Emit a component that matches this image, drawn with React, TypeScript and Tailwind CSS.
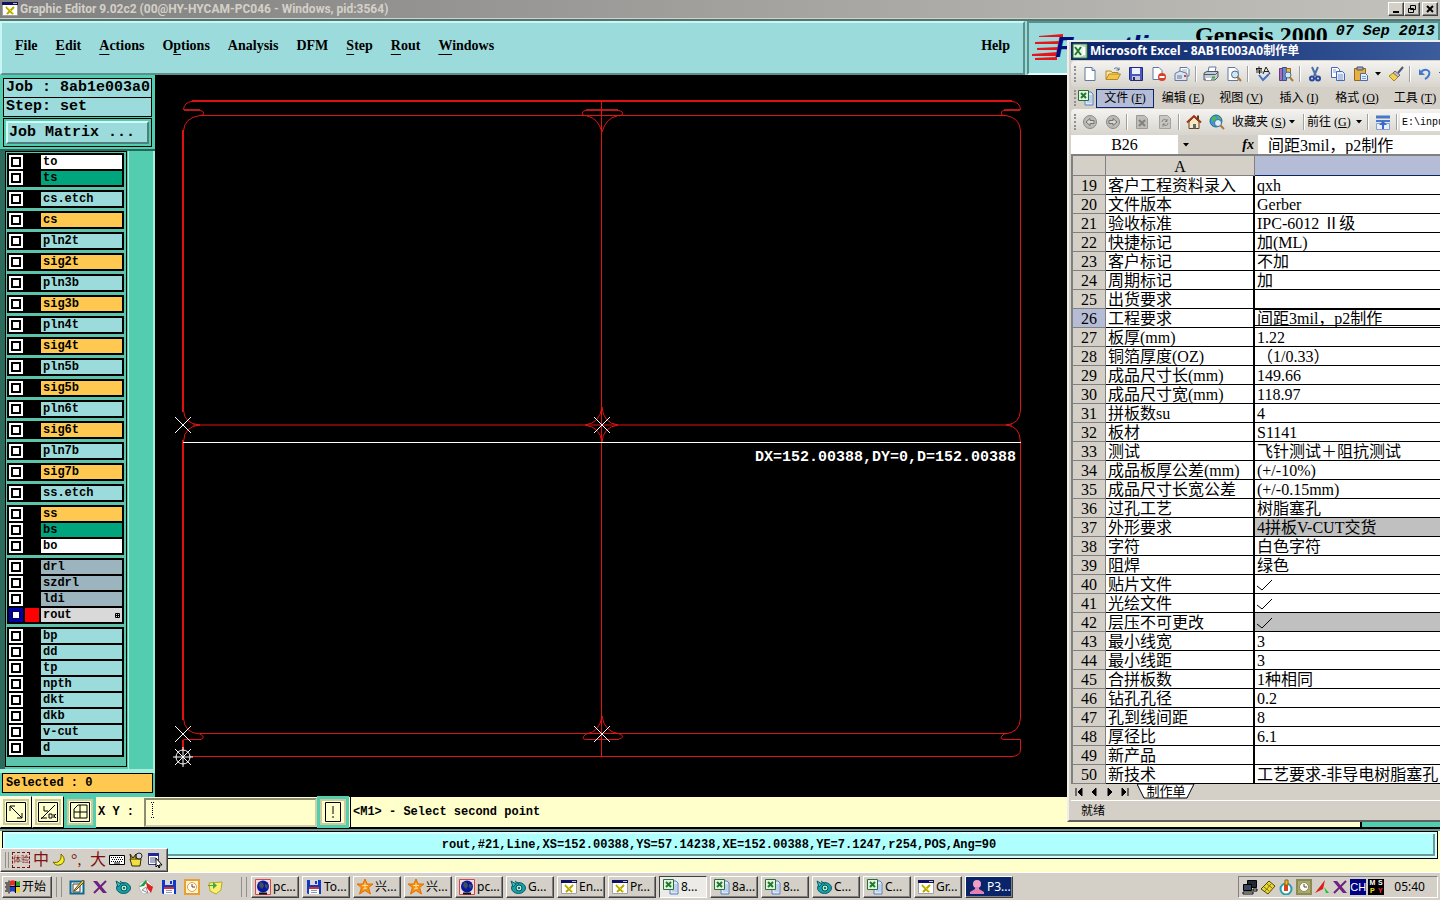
import type { ReactNode } from "react";

type Row = { no: number; label: string; value: string; shaded?: boolean };

const raised =
  "border border-t-white border-l-white border-r-[#404040] border-b-[#404040] shadow-[inset_-1px_-1px_0_#808080]";
const mono = "font-['Liberation_Mono',monospace] font-bold";
const song = "font-['Liberation_Serif','Noto_Sans_CJK_SC',serif]";
const tahoma = "font-['Noto_Sans','Noto_Sans_CJK_SC',sans-serif]";

const layerColors = {
  white: "bg-white",
  green: "bg-[#00a57d]",
  cyan: "bg-[#9cdbdb]",
  orange: "bg-[#ffc850]",
  slate: "bg-[#9cb4be]",
  gray: "bg-[#d9d9d9]",
};

type Layer = [string, keyof typeof layerColors];

const layerGroups: Layer[][] = [
  [["to", "white"], ["ts", "green"]],
  [["cs.etch", "cyan"]],
  [["cs", "orange"]],
  [["pln2t", "cyan"]],
  [["sig2t", "orange"]],
  [["pln3b", "cyan"]],
  [["sig3b", "orange"]],
  [["pln4t", "cyan"]],
  [["sig4t", "orange"]],
  [["pln5b", "cyan"]],
  [["sig5b", "orange"]],
  [["pln6t", "cyan"]],
  [["sig6t", "orange"]],
  [["pln7b", "cyan"]],
  [["sig7b", "orange"]],
  [["ss.etch", "cyan"]],
  [["ss", "orange"], ["bs", "green"], ["bo", "white"]],
  [["drl", "slate"], ["szdrl", "slate"], ["ldi", "slate"], ["rout", "gray"]],
  [
    ["bp", "cyan"], ["dd", "cyan"], ["tp", "cyan"], ["npth", "cyan"],
    ["dkt", "cyan"], ["dkb", "cyan"], ["v-cut", "cyan"], ["d", "cyan"],
  ],
];

const rows: Row[] = [
  { no: 19, label: "客户工程资料录入", value: "qxh" },
  { no: 20, label: "文件版本", value: "Gerber" },
  { no: 21, label: "验收标准", value: "IPC-6012 Ⅱ级" },
  { no: 22, label: "快捷标记", value: "加(ML)" },
  { no: 23, label: "客户标记", value: "不加" },
  { no: 24, label: "周期标记", value: "加" },
  { no: 25, label: "出货要求", value: "" },
  { no: 26, label: "工程要求", value: "间距3mil，p2制作" },
  { no: 27, label: "板厚(mm)", value: "1.22" },
  { no: 28, label: "铜箔厚度(OZ)", value: "（1/0.33）" },
  { no: 29, label: "成品尺寸长(mm)", value: "149.66" },
  { no: 30, label: "成品尺寸宽(mm)", value: "118.97" },
  { no: 31, label: "拼板数su", value: "4" },
  { no: 32, label: "板材", value: "S1141" },
  { no: 33, label: "测试", value: "飞针测试＋阻抗测试" },
  { no: 34, label: "成品板厚公差(mm)", value: "(+/-10%)" },
  { no: 35, label: "成品尺寸长宽公差", value: "(+/-0.15mm)" },
  { no: 36, label: "过孔工艺", value: "树脂塞孔" },
  { no: 37, label: "外形要求", value: "4拼板V-CUT交货", shaded: true },
  { no: 38, label: "字符", value: "白色字符" },
  { no: 39, label: "阻焊", value: "绿色" },
  { no: 40, label: "贴片文件", value: "✓" },
  { no: 41, label: "光绘文件", value: "✓" },
  { no: 42, label: "层压不可更改", value: "✓", shaded: true },
  { no: 43, label: "最小线宽", value: "3" },
  { no: 44, label: "最小线距", value: "3" },
  { no: 45, label: "合拼板数", value: "1种相同" },
  { no: 46, label: "钻孔孔径", value: "0.2" },
  { no: 47, label: "孔到线间距", value: "8" },
  { no: 48, label: "厚径比", value: "6.1" },
  { no: 49, label: "新产品", value: "" },
  { no: 50, label: "新技术", value: "工艺要求-非导电树脂塞孔" },
];

/* ---------- icons ---------- */

function Ico({ children }: { children: ReactNode }) {
  return (
    <svg viewBox="0 0 16 16" className="h-4 w-4 shrink-0" fill="none" aria-hidden="true">
      {children}
    </svg>
  );
}

const ExceedIcon = () => (
  <Ico>
    <path d="M.5 1.500h15v13H.5z" fill="#fff" stroke="#a0a0a0" />
    <path d="M0 1h16v3H0z" fill="#101060" />
    <path d="M11 2h4v1h-4z" fill="#c0c0c0" />
    <path d="M4 6l7 7M12 6l-7 7" stroke="#b4a800" strokeWidth="2" />
    <path d="M5 6l7 7" stroke="#f0e020" />
  </Ico>
);

const ExcelIcon = () => (
  <Ico>
    <path d="M1 1h14v14H1z" fill="#dcefdc" stroke="#2b6e35" />
    <path d="M9 3h5v10H9z" fill="#fff" stroke="#80b080" />
    <path d="M2 3h9v10H2z" fill="#e8f6e6" />
    <path d="M3 4l6 8M9 4l-6 8" stroke="#1f7a2e" strokeWidth="2" />
  </Ico>
);

const SheetIcon = () => (
  <Ico>
    <path d="M7 2h6l2 2v11H7z" fill="#dceafc" stroke="#5a80b8" />
    <path d="M9 6h5M9 8h5M9 10h5M9 12h5" stroke="#9fb9dd" />
    <path d="M.5.5h10v10H.5z" fill="#e4f3e0" stroke="#2b6e35" />
    <path d="M3 3l5 5M8 3L3 8" stroke="#1f7a2e" strokeWidth="2" />
  </Ico>
);

const NewIcon = () => (
  <Ico>
    <path d="M3 1.500h7l3 3v10H3z" fill="#fff" stroke="#6078a0" />
    <path d="M10 1.500v3h3" fill="#c8d8f0" stroke="#6078a0" />
  </Ico>
);

const OpenIcon = () => (
  <Ico>
    <path d="M1 13V5h5l1 1.500h6V8" fill="#ffe9a0" stroke="#b08828" />
    <path d="M1 13.500L4 8h11.500l-3 5.500z" fill="#f6c548" stroke="#b08828" />
    <path d="M9 3c2-2 4-1 5 1m0 0V1.500M14 4h-2.500" stroke="#506890" />
  </Ico>
);

const SaveIcon = () => (
  <Ico>
    <path d="M1.500 1.500h13v13h-12l-1-1z" fill="#4a58c0" stroke="#202a80" />
    <path d="M4 2h8v6H4z" fill="#eef2ff" />
    <path d="M4 10h8v4H4z" fill="#c4c8d4" />
    <path d="M5 11h2v3H5z" fill="#202a80" />
  </Ico>
);

const FloppyIcon = () => (
  <Ico>
    <path d="M1 1h14v14H2l-1-1z" fill="#1038c8" />
    <path d="M4 1h8v5H4z" fill="#d8d8d8" />
    <path d="M9 2h2v3H9z" fill="#1038c8" />
    <path d="M3 8h10v7H3z" fill="#fff" />
    <path d="M3 8h10v2H3z" fill="#d83020" />
    <path d="M5 11.500h6M5 13.500h6" stroke="#8898c0" />
  </Ico>
);

const DeniedIcon = () => (
  <Ico>
    <path d="M2 1.500h6l3 3v9H2z" fill="#fff" stroke="#6078a0" />
    <circle cx="11" cy="11" r="4" fill="#d84028" />
    <path d="M8.500 11h5" stroke="#fff" strokeWidth="2" />
  </Ico>
);

const MailIcon = () => (
  <Ico>
    <path d="M6 1.500h7l2 2V10H6z" fill="#fff" stroke="#6078a0" />
    <path d="M8 4h5M8 6h5" stroke="#9fb0cc" />
    <path d="M1 7.500l5-2.500 7 2.500v7H1z" fill="#dde4f0" stroke="#6078a0" />
    <path d="M3 10h5M3 12h5" stroke="#6078a0" />
    <path d="M10 9h2v2h-2z" fill="#d84028" />
  </Ico>
);

const PrintIcon = () => (
  <Ico>
    <path d="M5 6l1-5h7l-1 5" fill="#fff" stroke="#6078a0" />
    <path d="M1 7l3-1.500h11V11l-3 3H1z" fill="#c4cbd8" stroke="#505868" />
    <path d="M1 8.500h11.500L15 6" stroke="#505868" />
    <path d="M9 10.500h3v2H9z" fill="#30b030" />
    <path d="M3 13h5" stroke="#fff" strokeWidth="2" />
  </Ico>
);

const PreviewIcon = () => (
  <Ico>
    <path d="M2 1.500h7l3 3v10H2z" fill="#fff" stroke="#6078a0" />
    <circle cx="9" cy="8.500" r="3.500" fill="#cfe8f8" stroke="#506890" />
    <path d="M11.500 11l3.500 4" stroke="#b07830" strokeWidth="2" />
  </Ico>
);

const SpellIcon = () => (
  <Ico>
    <path d="M1 2.500h6M4 .5v2M1.500 2.500v2M7 4H2m2.500 0v4M1 6h6.500" stroke="#202020" />
    <path d="M8 8l3-7 4 7M9 5.500h5" stroke="#202020" />
    <path d="M4 9l4 5 6-6" stroke="#4870c8" strokeWidth="2" />
  </Ico>
);

const ResearchIcon = () => (
  <Ico>
    <path d="M1.500 2.500h3v12h-3z" fill="#a86cb8" stroke="#683878" />
    <path d="M4.500 1.500h4v13h-4z" fill="#6888d0" stroke="#384c90" />
    <path d="M8.500 2.500h4v8h-4z" fill="#e8b860" stroke="#906820" />
    <circle cx="10" cy="9" r="3" fill="#cfe8f8" stroke="#506890" />
    <path d="M12 11.500l3 3.500" stroke="#b07830" strokeWidth="2" />
  </Ico>
);

const CutIcon = () => (
  <Ico>
    <path d="M5 1l4 9M11 1L7 10" stroke="#5070a8" strokeWidth="2" />
    <circle cx="5" cy="12.500" r="2" stroke="#2848a0" strokeWidth="2" />
    <circle cx="11" cy="12.500" r="2" stroke="#2848a0" strokeWidth="2" />
  </Ico>
);

const CopyIcon = () => (
  <Ico>
    <path d="M1.500 1.500h6l2 2v8h-8z" fill="#fff" stroke="#4868b0" />
    <path d="M6.500 5.500h6l2 2v7h-8z" fill="#e4eefc" stroke="#4868b0" />
    <path d="M8 9h5M8 11h5M8 13h5M3 4h3M3 6h3" stroke="#7f9bd0" />
  </Ico>
);

const PasteIcon = () => (
  <Ico>
    <path d="M1.500 2.500h11v12h-11z" fill="#e8b040" stroke="#906820" />
    <path d="M4 1h6v3H4z" fill="#a0a8b8" stroke="#505868" />
    <path d="M7.500 7.500h5l2 2v5h-7z" fill="#e4eefc" stroke="#4868b0" />
    <path d="M9 10.500h4M9 12.500h4" stroke="#7f9bd0" />
  </Ico>
);

const BrushIcon = () => (
  <Ico>
    <path d="M15 1l-5 6" stroke="#505868" strokeWidth="2" />
    <path d="M7 5l5 4-2 2-5-4z" fill="#c0b8d8" stroke="#686088" />
    <path d="M5 7l5 4-4 4-5-5z" fill="#f0d050" stroke="#a88820" />
  </Ico>
);

const UndoIcon = () => (
  <Ico>
    <path d="M4 6c4-4 10-2 8 3-1 2-2 3-4 4" stroke="#4078d0" strokeWidth="2" />
    <path d="M2 3v6h6z" fill="#4078d0" />
  </Ico>
);

const ArrowDisc = ({ flip }: { flip?: boolean }) => (
  <Ico>
    <circle cx="8" cy="8" r="6.500" fill="#bcbab4" stroke="#8c8a84" />
    <path
      d={flip ? "M12 8L8 4.500v2H4v3h4v2z" : "M4 8l4-3.500v2h4v3H8v2z"}
      fill="#d8d6d0"
      stroke="#747270"
    />
  </Ico>
);

const StopIcon = () => (
  <Ico>
    <path d="M2.500 1.500h8l3 3v10h-11z" fill="#c0beb8" stroke="#9c9a94" />
    <path d="M5 6l6 6M11 6l-6 6" stroke="#83817b" strokeWidth="2" />
  </Ico>
);

const RefreshIcon = () => (
  <Ico>
    <path d="M2.500 1.500h8l3 3v10h-11z" fill="#c8c6c0" stroke="#a4a29c" />
    <path d="M5 8c0-3 4-3 5-1m1 2c0 3-4 3-5 1M10 5v2.500H8M6 12.500V10h2" stroke="#83817b" />
  </Ico>
);

const HomeIcon = () => (
  <Ico>
    <path d="M3 8v6.500h10V8L8 3z" fill="#f8e8c0" stroke="#604020" />
    <path d="M1 8.500L8 2l7 6.500" stroke="#a03818" strokeWidth="2" />
    <path d="M7 10h3v4.500H7z" fill="#606870" />
    <path d="M12 1.500v4" stroke="#604020" strokeWidth="2" />
  </Ico>
);

const GlobeSearchIcon = () => (
  <Ico>
    <circle cx="7" cy="7" r="6" fill="#3c9ad0" stroke="#206890" />
    <path d="M3 3c3-1 5 0 4 2s-3 1-4 3M9 2c2 1 3 3 3 4l-3-1z" fill="#50b850" />
    <circle cx="9" cy="9" r="3.500" fill="#d8f0fc" stroke="#506890" />
    <path d="M11.500 11.500L15 15" stroke="#b07830" strokeWidth="2" />
  </Ico>
);

const AddressIcon = () => (
  <Ico>
    <path d="M1 1.500h14v3H1zM1 6h14v2H1z" fill="#4878c8" />
    <path d="M1.500 9.500h13v6h-13z" fill="#e8f0fc" stroke="#88a0d0" />
    <path d="M8 7l4 4H9v4H7v-4H4z" fill="#3868d0" />
  </Ico>
);

const GlobeTaskIcon = () => (
  <Ico>
    <path d="M.5.5h15v15H.5z" fill="#f4dcdc" stroke="#d04848" />
    <circle cx="8" cy="7.500" r="6" fill="#0818a0" />
    <path d="M5 3l3 1 1 3-2 3-3-3zM10 5l3 1-1 4-2-2z" fill="#405058" />
    <path d="M4 14.500h8" stroke="#101010" strokeWidth="2" />
  </Ico>
);

const StarIcon = () => (
  <Ico>
    <path d="M8 0l2.200 5H16l-4.400 3.600L13.500 15 8 11.500 2.500 15l1.900-6.400L0 5h5.800z" fill="#f49018" stroke="#e07000" />
    <path d="M5 6.500h6M8 4v5M6 10l4-1" stroke="#ffe090" />
  </Ico>
);

const GearEyeIcon = () => (
  <Ico>
    <ellipse cx="8.500" cy="9" rx="7" ry="5.500" fill="#18a0a8" stroke="#086068" />
    <path d="M1 2l5 3-3 3zM5 2l4 3" fill="#30c0b8" stroke="#086068" />
    <circle cx="9" cy="9" r="3" fill="#a8f0c0" stroke="#085058" />
    <circle cx="9" cy="9" r="1" fill="#0828a0" />
  </Ico>
);

const PersonIcon = () => (
  <Ico>
    <circle cx="8" cy="5" r="4" fill="#f0a0c8" />
    <path d="M6 8h4v2l5 3v2H1v-2l5-3z" fill="#e480b4" />
  </Ico>
);

const NotepadIcon = () => (
  <Ico>
    <path d="M1.500 2.500h13v12h-13z" fill="#e8f8fc" stroke="#106888" strokeWidth="2" />
    <path d="M4 5h7v8H4z" fill="#fff" stroke="#404040" />
    <path d="M14 1L6 10l-1 2 2-1 8-8z" fill="#f0d050" stroke="#604810" />
  </Ico>
);

const PurpleXIcon = () => (
  <Ico>
    <path d="M1 2h4l10 12h-4z" fill="#702080" />
    <path d="M14 2L2 14" stroke="#702080" strokeWidth="2" />
  </Ico>
);

const KiteIcon = () => (
  <Ico>
    <path d="M2 4l7-3 6 6-3 7-7 1-4-6z" fill="#fff" stroke="#c0c0c0" />
    <path d="M8 1L1 8l5-1 3-4z" fill="#10a040" />
    <path d="M8 3l7 5-2 6-4-5z" fill="#e02020" />
    <path d="M4 11l4-3 2 6z" fill="#f0f0f0" stroke="#909090" />
  </Ico>
);

const ClockIcon = ({ color, face }: { color: string; face: string }) => (
  <Ico>
    <path d="M1 1h14v14H1z" fill={face} stroke={color} strokeWidth="2" />
    <circle cx="8" cy="8" r="4.500" fill="#fff" stroke={color} />
    <path d="M8 5v3h3" stroke="#604020" />
  </Ico>
);

const NoteIcon = () => (
  <Ico>
    <path d="M2 4l13-1-1 8-5 4-6-3z" fill="#f8f070" stroke="#b8a830" />
    <path d="M1 6h5V3l4 3.500L6 10V7H1z" fill="#40a840" />
  </Ico>
);

const WindowsFlag = () => (
  <Ico>
    <path d="M5 2c2-1 4-1 5 0v5C8 6 7 6 5 7z" fill="#e03020" />
    <path d="M11 2c1 1 3 1 4 0v5c-1 1-3 1-4 0z" fill="#20a030" />
    <path d="M5 8c2-1 4-1 5 0v5c-2-1-3-1-5 0z" fill="#2040d0" />
    <path d="M11 8c1 1 3 1 4 0v5c-1 1-3 1-4 0z" fill="#f0d020" />
    <path d="M4 1.500v13M10.500 2v12M5 7.500h10" stroke="#000" />
    <path d="M0 4h3M1 6h2M0 8h3M1 10h2M0 12h3" stroke="#000" />
  </Ico>
);

const NetworkIcon = () => (
  <Ico>
    <path d="M5.500 1.500h9v7h-9z" fill="#202838" stroke="#000" />
    <path d="M1.500 5.500h8v6h-8z" fill="#384858" stroke="#000" />
    <path d="M1 13h10v2H1zM11 10h4v2h-4z" fill="#e8e8e0" stroke="#000" />
  </Ico>
);

const DiamondIcon = () => (
  <Ico>
    <path d="M1 10l8-8 6 5-7 8z" fill="#e8d830" stroke="#504808" />
    <path d="M4 8l5 4M7 5l5 4M5 12l6-7" stroke="#807410" />
  </Ico>
);

const BottleIcon = () => (
  <Ico>
    <circle cx="8" cy="10" r="5.500" fill="#fff" stroke="#20a0a8" strokeWidth="2" />
    <path d="M6 6h4v6H6z" fill="#e04020" />
    <path d="M7 1h3v5H7z" fill="#f0c020" stroke="#906010" />
  </Ico>
);

const SignalIcon = () => (
  <Ico>
    <path d="M11 1L9 10l-8 4z" fill="#e01818" />
    <path d="M10 8l5 6h-3z" fill="#20c020" />
  </Ico>
);

const KeyboardIcon = () => (
  <Ico>
    <path d="M.5 3.500h15v9H.5z" fill="#fff" stroke="#000" />
    <path d="M2 5.500h12M3 7.500h11M2 9.500h12" stroke="#000" strokeDasharray="1 1" />
    <path d="M5 11h6" stroke="#000" />
  </Ico>
);

const PaintIcon = () => (
  <Ico>
    <path d="M2 7h11l-1 7H4z" fill="#f0e040" stroke="#302808" />
    <path d="M3 7L2 2l3 4 3-4v5" fill="#c09030" stroke="#302808" />
    <circle cx="11" cy="4" r="3" fill="#c8d8f0" stroke="#302808" />
  </Ico>
);

const PropsIcon = () => (
  <Ico>
    <path d="M1.500 1.500h10v11h-10z" fill="#fff" stroke="#303878" />
    <path d="M1 1h11v3H1z" fill="#202890" />
    <path d="M3 6h6M3 8h6M3 10h5" stroke="#505890" />
    <path d="M9 6v9l2-2 1 3 1-1-1-2h3z" fill="#fff" stroke="#000" />
  </Ico>
);

/* ---------- graphic editor ---------- */

function TitleBar() {
  const glyphs = ["M3 9h6", "M4.500 2.500h5v4h-5zM2.500 5.500h5v4h-5z", "M3 3l6 6M9 3l-6 6"];
  const names = ["Minimize", "Restore", "Close"];
  return (
    <div className="flex h-[19px] shrink-0 items-center border-b border-[#d4d0c8] bg-linear-to-r from-[#808080] to-[#c4c2bc] px-0.5">
      <ExceedIcon />
      <h1 className="flex-1 pl-0.5 font-['Roboto',sans-serif] text-xs leading-4 font-bold whitespace-pre text-[#d4d0c8]">
        Graphic Editor 9.02c2 (00@HY-HYCAM-PC046 - Windows, pid:3564)
      </h1>
      {names.map((name, i) => (
        <button
          key={name}
          aria-label={name}
          className={`flex h-3.5 w-4 items-center justify-center bg-[#d4d0c8] last:ml-0.5 ${raised}`}
        >
          <svg viewBox="0 0 12 12" className="h-3 w-3" fill="none" stroke="#000" strokeWidth={i === 1 ? 1 : 2}>
            <path d={glyphs[i]} />
          </svg>
        </button>
      ))}
    </div>
  );
}

function Menu({ text, mark }: { text: string; mark?: number }) {
  return (
    <button className="whitespace-nowrap">
      {mark === undefined ? (
        text
      ) : (
        <>
          {text.slice(0, mark)}
          <span className="underline underline-offset-4">{text[mark]}</span>
          {text.slice(mark + 1)}
        </>
      )}
    </button>
  );
}

function Header() {
  return (
    <header className="flex h-14 shrink-0 border-t-2 border-[#4f7774] bg-[#9cdbdb]">
      <nav className="flex flex-1 items-center gap-[18px] border-2 border-t-[#c8f6f4] border-r-[#5b8f8c] border-b-[#5b8f8c] border-l-[#c8f6f4] px-[13px] pb-1 font-['Liberation_Serif',serif] text-sm leading-5 font-bold shadow-[0_1px_0_#e0ffff]">
        <Menu text="File" mark={0} />
        <Menu text="Edit" mark={0} />
        <Menu text="Actions" mark={0} />
        <Menu text="Options" mark={1} />
        <Menu text="Analysis" />
        <Menu text="DFM" />
        <Menu text="Step" mark={0} />
        <Menu text="Rout" mark={0} />
        <Menu text="Windows" mark={0} />
        <span className="flex-1" />
        <Menu text="Help" />
      </nav>
      <div className="ml-0.5 flex w-[413px] items-start overflow-hidden border-2 border-[#5b8f8c] border-b-[#e0ffff]">
        <svg viewBox="0 0 160 50" className="h-[50px] w-40 shrink-0">
          <path d="M10 13l24-2v3H10zM6 19l26-1v3H6zM8 25l22-1v3H8zM3 31l26-2v4H3zM6 35l22-1v3H6z" fill="#e8141c" />
          <text x="26" y="34" fontSize="30" fontWeight="bold" fontStyle="italic" fontFamily="Liberation Sans" fill="#00107c">
            Frontline
          </text>
        </svg>
        <span className="ml-1.5 font-['Liberation_Serif',serif] text-2xl leading-6 font-bold whitespace-nowrap">Genesis 2000</span>
        <span className={`${mono} ml-2 text-[15px] leading-[18px] whitespace-nowrap italic`}>07 Sep 2013</span>
      </div>
    </header>
  );
}

function LayerRow({ layer: [name, color] }: { layer: Layer }) {
  const active = name === "rout";
  return (
    <label className="flex h-3.5 gap-0.5">
      <input
        type="checkbox"
        className={`h-3.5 w-3.5 shrink-0 appearance-none border-2 bg-white ${
          active ? "border-[#0000b4] shadow-[inset_0_0_0_2px_#000070]" : "border-white shadow-[inset_0_0_0_2px_#000]"
        }`}
      />
      <span className={`w-3.5 shrink-0 ${active ? "bg-[#ff0000]" : "bg-black"}`} />
      <span className={`flex flex-1 items-center justify-between px-0.5 leading-[14px] ${layerColors[color]}`}>
        {name}
        {active && (
          <svg viewBox="0 0 5 5" className="h-[5px] w-[5px]" fill="none" stroke="#000">
            <path d="M.5.5h4v4h-4zM2.500 0v5M0 2.500h5" />
          </svg>
        )}
      </span>
    </label>
  );
}

function Sidebar() {
  return (
    <aside className={`${mono} flex w-[155px] shrink-0 flex-col bg-[#52cdb0] text-xs text-black`}>
      <div className="flex flex-col border-b-2 border-[#226858] px-[3px] pt-[3px] pb-0.5 text-[15px] whitespace-pre">
        <div className="h-5 overflow-hidden border border-black bg-[#9cdbdb] pl-0.5 leading-[18px]">Job : 8ab1e003a0</div>
        <div className="h-[19px] border border-t-0 border-black bg-[#9cdbdb] pl-0.5 leading-[18px]">Step: set</div>
        <div className="mt-px border border-black p-0.5">
          <button className="h-[23px] w-full border-2 border-t-[#d0fff8] border-r-[#4f7f7c] border-b-[#4f7f7c] border-l-[#d0fff8] bg-[#9cdbdb] pl-px text-left leading-[19px]">
            Job Matrix ...
          </button>
        </div>
      </div>
      <div className="flex min-h-0 flex-1 items-start border-l-[5px] border-l-[#2d6b5d]">
        <div className="flex w-[122px] flex-col gap-[3px] border border-black bg-[#5cc4aa] pt-px pr-0.5 pb-[9px] pl-px">
          {layerGroups.map((group) => (
            <div key={group[0][0]} className="flex flex-col gap-0.5 bg-black p-0.5">
              {group.map((layer) => (
                <LayerRow key={layer[0]} layer={layer} />
              ))}
            </div>
          ))}
        </div>
        <div className="ml-px flex-1 self-stretch border-r-2 border-l border-[#a0f0dc]" />
      </div>
      <div className="border-t-4 border-b-4 border-t-[#a0f0dc] border-b-[#52cdb0] px-0.5">
        <div className="h-5 border border-black bg-[#ffc850] pl-[3px] leading-[18px]">Selected : 0</div>
      </div>
    </aside>
  );
}

const Cross = ({ x, y }: { x: number; y: number }) => (
  <path d={`M${x - 8} ${y - 8}l16 16M${x + 8} ${y - 8}l-16 16`} stroke="#fff" />
);

function Canvas() {
  return (
    <svg viewBox="155 75 1285 722" preserveAspectRatio="xMinYMin meet" className="min-w-0 flex-1 bg-black" fill="none">
      <g stroke="#e01010" strokeWidth="2">
        <path d="M192 101H1012M183 130V412M183 440V720M183 740V750" />
        <path d="M184 110H200M586 110H618M1004 110H1020" stroke="#b81818" />
      </g>
      <g stroke="#e01414">
        {/* rails and hooks at the top */}
        <path d="M192 101.500Q184 102 183.500 110M1012 101.500Q1020 102 1020.500 110" />
        <path d="M200 110.500Q205 111 203 115L200 115.500M586 110.500Q581 111 583 115L586 116M618 110.500Q624 111 622 115L619 116M1004 110.500Q1000 111 1002 115L1005 116" />
        <path d="M200 115.500H1006M193 425H1012M200 733.500H1006M190 756.500H1012" />
        {/* panel corners */}
        <path d="M183.500 131Q184 118 200 115.500M1006 115.500Q1020 118 1020.500 131" />
        <path d="M183.500 410Q184 424 200 425Q184 426 183.500 442M1020.500 410Q1020 424 1006 425Q1020 426 1020.500 442" />
        <path d="M183.500 718Q184 733 200 734Q206 737 201 739.500H183.500M1020.500 718Q1020 733 1004 734Q998 739 1004 739.500H1020.500V750Q1020 756 1012 756.500" />
        <path d="M1020.500 131V410M1020.500 442V718" />
        <path d="M601.500 101V757" />
        {/* junctions on the centre line */}
        <path d="M587 116Q598 118 602 132Q606 118 617 116" />
        <path d="M602 407Q603 423 618 425Q603 427 602 442Q600 427 585 425Q600 423 602 407" />
        <path d="M602 716Q600 732 586 734Q580 739 586 739.500H618Q626 737 620 734Q604 732 602 716" />
      </g>
      <path d="M183 442.500H1021" stroke="#fff" />
      <Cross x={183} y={425} />
      <Cross x={602} y={425} />
      <Cross x={183} y={734} />
      <Cross x={602} y={734} />
      <Cross x={183} y={757} />
      <path d="M173 757h20M183 747v20" stroke="#fff" />
      <circle cx="183" cy="757" r="7" stroke="#fff" />
      <text x="755" y="461" fontSize="15" fontWeight="bold" fontFamily="Liberation Mono" fill="#fff">
        DX=152.00388,DY=0,D=152.00388
      </text>
    </svg>
  );
}

function ToolButton({ label, path, green }: { label: string; path: string; green?: boolean }) {
  return (
    <button
      aria-label={label}
      className={`flex h-8 w-8 shrink-0 items-center justify-center bg-[#ffffcc] ${
        green ? "border-[3px] border-[#52cdb0]" : "border border-r-black border-b-black border-t-white border-l-white"
      }`}
    >
      <span className="border-2 border-[#cccaa0] p-px">
        <svg viewBox="0 0 20 20" className="h-5 w-5" fill="none" stroke="#000">
          <path d={path} />
        </svg>
      </span>
    </button>
  );
}

function CommandBar() {
  return (
    <div className={`${mono} flex h-8 shrink-0 items-center border-b-2 border-black bg-[#ffffcc] text-xs`}>
      <ToolButton label="Snap line" path="M.5.5h19v19H.5zM4 4l12 12M4 9V4h5M16 11v5h-5" />
      <ToolButton label="Snap angle" path="M.5.5h19v19H.5zM3 17L17 3M6 4v5h4M3 16h6M11 12v4h3v-4zM16 12v4M18 12l-2 2 2 2" />
      <ToolButton label="Snap grid" green path="M.5.5h19v19H.5zM4 7l4-4h9v13H4zM10 3v13M4 10h13" />
      <label htmlFor="xy" className="w-12 pl-0.5 whitespace-pre">X Y :</label>
      <div className="relative">
        <input
          id="xy"
          className="block h-[29px] w-[173px] border-2 border-t-[#8c8c70] border-r-[#d0cea4] border-b-[#d0cea4] border-l-[#8c8c70] bg-[#ffffcc] px-1 outline-none"
        />
        <svg viewBox="0 0 3 16" className="pointer-events-none absolute top-1 left-[7px] h-4 w-[3px]" stroke="#000" fill="none">
          <path d="M0 .5h3M0 15.500h3M1.500 2v12" strokeDasharray="1 1" />
        </svg>
      </div>
      <ToolButton label="Warning" green path="M2.500.5h15v19h-15zM10 4v8M10 14v2" />
      <span className="ml-px h-full border-l border-black pl-0.5 leading-[30px] whitespace-pre">{"<M1> - Select second point"}</span>
      <span className="ml-auto h-full w-20 border-l-2 border-black bg-[#52cdb0]" />
    </div>
  );
}

function StatusLine() {
  return (
    <div className="shrink-0 border-t-2 border-[#6b9a98] bg-[#ffffcc] pb-[13px]">
      <div className="mx-0.5 h-7 border border-black bg-[#d8ffff] p-0.5">
        <p className={`${mono} h-full border-r-2 border-b-2 border-[#6b9a98] bg-[#b0ffff] text-center text-xs leading-[22px] whitespace-pre`}>
          rout,#21,Line,XS=152.00388,YS=57.14238,XE=152.00388,YE=7.1247,r254,POS,Ang=90
        </p>
      </div>
    </div>
  );
}

function ImeBar() {
  return (
    <div className={`absolute bottom-7 left-0 flex h-6 items-center gap-[3px] bg-[#d4d0c8] px-1 text-base leading-5 text-[#801010] ${song} ${raised}`}>
      <span className="h-4 w-1 border-x border-[#909090]" />
      <span className="h-4 border border-dashed border-[#801010] text-center text-[8px] leading-[14px] whitespace-nowrap">体验</span>
      <span className="w-4">中</span>
      <Ico>
        <path d="M9 2c5 4 4 10-2 11-2 1-5-1-6-3 5 2 9-2 8-8z" fill="#f8f020" stroke="#706008" />
      </Ico>
      <span className="w-4">°,</span>
      <span className="w-4">大</span>
      <KeyboardIcon />
      <PaintIcon />
      <PropsIcon />
    </div>
  );
}

/* ---------- taskbar ---------- */

const tasks: { icon: ReactNode; text: string }[] = [
  { icon: <GlobeTaskIcon />, text: "pc..." },
  { icon: <FloppyIcon />, text: "To..." },
  { icon: <StarIcon />, text: "兴..." },
  { icon: <StarIcon />, text: "兴..." },
  { icon: <GlobeTaskIcon />, text: "pc..." },
  { icon: <GearEyeIcon />, text: "G..." },
  { icon: <ExceedIcon />, text: "En..." },
  { icon: <ExceedIcon />, text: "Pr..." },
  { icon: <SheetIcon />, text: "8..." },
  { icon: <SheetIcon />, text: "8a..." },
  { icon: <SheetIcon />, text: "8..." },
  { icon: <GearEyeIcon />, text: "C..." },
  { icon: <SheetIcon />, text: "C..." },
  { icon: <ExceedIcon />, text: "Gr..." },
  { icon: <PersonIcon />, text: "P3..." },
];

function taskStyle(i: number) {
  if (i === 8) return "border border-[#404040] border-r-white border-b-white bg-[#ecebe7]";
  if (i === 14) return `bg-[#0a246a] text-white ${raised}`;
  return `bg-[#d4d0c8] ${raised}`;
}

function Taskbar() {
  return (
    <footer className={`flex h-7 shrink-0 items-center border-t border-white bg-[#d4d0c8] px-0.5 text-xs leading-4 ${tahoma}`}>
      <button className={`flex h-[22px] w-[50px] items-center gap-px pl-0.5 whitespace-nowrap ${raised}`}>
        <WindowsFlag />
        开始
      </button>
      <span className="mx-1 h-5 w-1.5 border-x border-[#909090]" />
      <div className="ml-[3px] flex gap-[7px]">
        <NotepadIcon />
        <PurpleXIcon />
        <GearEyeIcon />
        <KiteIcon />
        <FloppyIcon />
        <ClockIcon color="#e8a030" face="#fff4d8" />
        <NoteIcon />
      </div>
      <span className="mr-1 ml-[18px] h-5 w-1.5 border-x border-[#909090]" />
      <div className="flex gap-[3px]">
        {tasks.map((task, i) => (
          <button key={i} className={`flex h-[22px] w-12 items-center gap-0.5 overflow-hidden pl-[3px] whitespace-nowrap ${taskStyle(i)}`}>
            {task.icon}
            {task.text}
          </button>
        ))}
      </div>
      <div className="ml-auto flex h-[22px] items-center gap-0.5 border border-[#808080] border-r-white border-b-white pr-3 pl-[3px]">
        <NetworkIcon />
        <DiamondIcon />
        <BottleIcon />
        <ClockIcon color="#8c8c50" face="#a8a870" />
        <SignalIcon />
        <PurpleXIcon />
        <span className="h-4 w-4 bg-[#000084] text-center font-['Liberation_Sans',sans-serif] text-[11px] text-white">CH</span>
        <span className="grid h-4 w-4 grid-cols-2 bg-black text-center font-['Liberation_Sans',sans-serif] text-[7px] leading-2 font-bold text-white">
          <span>M</span>
          <span>S</span>
          <span className="text-[#ffe020]">P</span>
          <span className="text-[#ff3030]">Y</span>
        </span>
        <span className="ml-2">05:40</span>
      </div>
    </footer>
  );
}

/* ---------- spreadsheet window ---------- */

const Tool = ({ label, children }: { label: string; children: ReactNode }) => (
  <button aria-label={label} className="flex w-[23px] shrink-0 justify-center">
    {children}
  </button>
);

const Sep = () => <span className="mx-0.5 h-4 w-0.5 shrink-0 border-r border-l border-r-white border-l-[#a0a0a0]" />;
const Grip = () => <span className="mr-0.5 ml-[3px] h-4 w-0.5 shrink-0 border-l-2 border-dotted border-[#909090]" />;
const Down = () => (
  <svg viewBox="0 0 12 6" className="h-1.5 w-3 shrink-0">
    <path d="M3 1h6L6 4.500z" fill="#000" />
  </svg>
);

const bar = "flex shrink-0 items-center rounded-l-sm bg-linear-to-b from-[#f4f3f0] to-[#d8d5ce]";

function Hot({ text, letter }: { text: string; letter: string }) {
  return (
    <>
      {text} (<u>{letter}</u>)
    </>
  );
}

const excelMenus = [
  ["文件", "F"], ["编辑", "E"], ["视图", "V"], ["插入", "I"], ["格式", "O"], ["工具", "T"],
];

function Sheet() {
  return (
    <table className="w-full table-fixed border-separate border-spacing-0 border-t-2 border-l-2 border-[#808080] bg-white text-base leading-[17px] whitespace-nowrap">
      <colgroup>
        <col className="w-[33px]" />
        <col className="w-[149px]" />
        <col />
      </colgroup>
      <thead>
        <tr className="h-5 bg-[#d4d0c8]">
          <th className="border-r border-b border-[#808080] p-0" />
          <th className="border-r border-b border-[#808080] p-0 pt-0.5 font-normal">A</th>
          <th className="border-b border-[#0a246a] bg-[#b5bdd6] p-0" />
        </tr>
      </thead>
      <tbody>
        {rows.map((row) => {
          const current = row.no === 26;
          return (
            <tr key={row.no} className="h-[19px]">
              <th scope="row" className={`border-r border-b border-[#808080] p-0 pt-px font-normal ${current ? "bg-[#b5bdd6]" : "bg-[#d4d0c8]"}`}>
                {row.no}
              </th>
              <td className="overflow-hidden border-r-2 border-b border-black p-0 pt-px pl-0.5">{row.label}</td>
              <td
                className={`overflow-hidden border-b border-black p-0 pt-px pl-0.5 ${row.shaded ? "bg-[#c0c0c0]" : ""} ${
                  current ? "shadow-[inset_0_1px_0_#000,inset_0_-1px_0_#fff,inset_0_-2px_0_#000]" : ""
                }`}
              >
                {row.value === "✓" ? (
                  <svg viewBox="0 0 16 12" className="h-3 w-4" fill="none" stroke="#000" role="img" aria-label="✓">
                    <path d="M0 7l5 4L15 1" />
                  </svg>
                ) : (
                  row.value
                )}
              </td>
            </tr>
          );
        })}
      </tbody>
    </table>
  );
}

function ExcelWindow() {
  const arrows = ["M3 1v8M9 1L5 5l4 4z", "M7 1L3 5l4 4z", "M3 1l4 4-4 4z", "M7 1v8M1 1l4 4-4 4z"];
  return (
    <section className={`absolute top-10 right-0 flex w-[373px] flex-col overflow-hidden border-t-2 border-b-2 border-l-2 border-t-[#f0eeea] border-b-[#606060] border-l-[#f0eeea] bg-[#d4d0c8] pl-0.5 ${song}`}>
      <div className="flex h-[18px] items-center gap-0.5 bg-linear-to-r from-[#0a246a] to-[#3c5c9c] pl-px">
        <ExcelIcon />
        <h2 className={`${tahoma} text-xs leading-4 font-bold whitespace-nowrap text-white`}>Microsoft Excel - 8AB1E003A0制作单</h2>
      </div>

      <div className={`${bar} mt-px h-[26px]`}>
        <Grip />
        <Tool label="New"><NewIcon /></Tool>
        <Tool label="Open"><OpenIcon /></Tool>
        <Tool label="Save"><SaveIcon /></Tool>
        <Tool label="Permission"><DeniedIcon /></Tool>
        <Tool label="Mail"><MailIcon /></Tool>
        <Sep />
        <Tool label="Print"><PrintIcon /></Tool>
        <Tool label="Preview"><PreviewIcon /></Tool>
        <Sep />
        <Tool label="Spelling"><SpellIcon /></Tool>
        <Tool label="Research"><ResearchIcon /></Tool>
        <Sep />
        <Tool label="Cut"><CutIcon /></Tool>
        <Tool label="Copy"><CopyIcon /></Tool>
        <Tool label="Paste"><PasteIcon /></Tool>
        <Down />
        <Tool label="Format painter"><BrushIcon /></Tool>
        <Sep />
        <Tool label="Undo"><UndoIcon /></Tool>
        <Down />
      </div>

      <div className="flex h-[22px] items-center text-xs leading-4">
        <Grip />
        <span className="mr-0.5 shrink-0"><SheetIcon /></span>
        {excelMenus.map(([text, letter], i) => (
          <button
            key={letter}
            className={`h-[19px] w-[58px] shrink-0 border text-center whitespace-nowrap ${
              i === 0 ? "border-[#0a246a] bg-[#b5bdd6]" : "border-transparent"
            }`}
          >
            <Hot text={text} letter={letter} />
          </button>
        ))}
      </div>

      <div className={`${bar} h-[26px] text-xs leading-4 whitespace-nowrap`}>
        <Grip />
        <Tool label="Back"><ArrowDisc /></Tool>
        <Tool label="Forward"><ArrowDisc flip /></Tool>
        <Sep />
        <Tool label="Stop"><StopIcon /></Tool>
        <Tool label="Refresh"><RefreshIcon /></Tool>
        <Sep />
        <Tool label="Home"><HomeIcon /></Tool>
        <Tool label="Search the web"><GlobeSearchIcon /></Tool>
        <button className="mr-[3px] flex w-[70px] shrink-0 items-center justify-between pl-1">
          <span><Hot text="收藏夹" letter="S" /></span>
          <Down />
        </button>
        <Sep />
        <button className="flex w-[58px] shrink-0 items-center justify-between">
          <span><Hot text="前往" letter="G" /></span>
          <Down />
        </button>
        <Sep />
        <Tool label="Address"><AddressIcon /></Tool>
        <Sep />
        <input
          aria-label="Address"
          defaultValue="E:\input"
          className="h-[18px] w-20 shrink-0 bg-white pl-0.5 font-['Liberation_Mono',monospace] text-[10px] outline-none"
        />
      </div>

      <div className="flex h-[19px] items-center text-base leading-[18px]">
        <input aria-label="Name box" defaultValue="B26" className="h-full w-[107px] bg-white text-center outline-none" />
        <button aria-label="Names" className="ml-0.5 w-4"><Down /></button>
        <span className="flex-1 pr-1 text-right text-sm font-bold italic">fx</span>
        <input
          aria-label="Formula"
          defaultValue="间距3mil，p2制作"
          className="h-full w-[182px] bg-white pb-0.5 pl-2.5 outline-none"
        />
      </div>

      <Sheet />

      <div className="flex h-4 items-stretch pl-0.5 text-[13px] leading-4">
        {arrows.map((d, i) => (
          <button key={i} aria-label="Scroll sheets" className="flex w-4 items-center">
            <svg viewBox="0 0 10 10" className="h-2.5 w-2.5" stroke="#000" strokeWidth="1">
              <path d={d} />
            </svg>
          </button>
        ))}
        <div className="relative flex w-[58px] justify-center">
          <svg viewBox="0 0 58 16" className="absolute inset-0 h-4 w-[58px]">
            <path d="M0 0l7 14h43l7-14z" fill="#fff" stroke="#000" />
          </svg>
          <span className="relative whitespace-nowrap">制作单</span>
        </div>
      </div>
      <div className="h-5 border-t border-white pl-2.5 text-xs leading-5">就绪</div>
    </section>
  );
}

export default function App() {
  return (
    <div className="relative flex h-screen flex-col overflow-hidden bg-black text-black">
      <TitleBar />
      <Header />
      <main className="flex min-h-0 flex-1">
        <Sidebar />
        <Canvas />
      </main>
      <CommandBar />
      <StatusLine />
      <Taskbar />
      <ImeBar />
      <ExcelWindow />
    </div>
  );
}
